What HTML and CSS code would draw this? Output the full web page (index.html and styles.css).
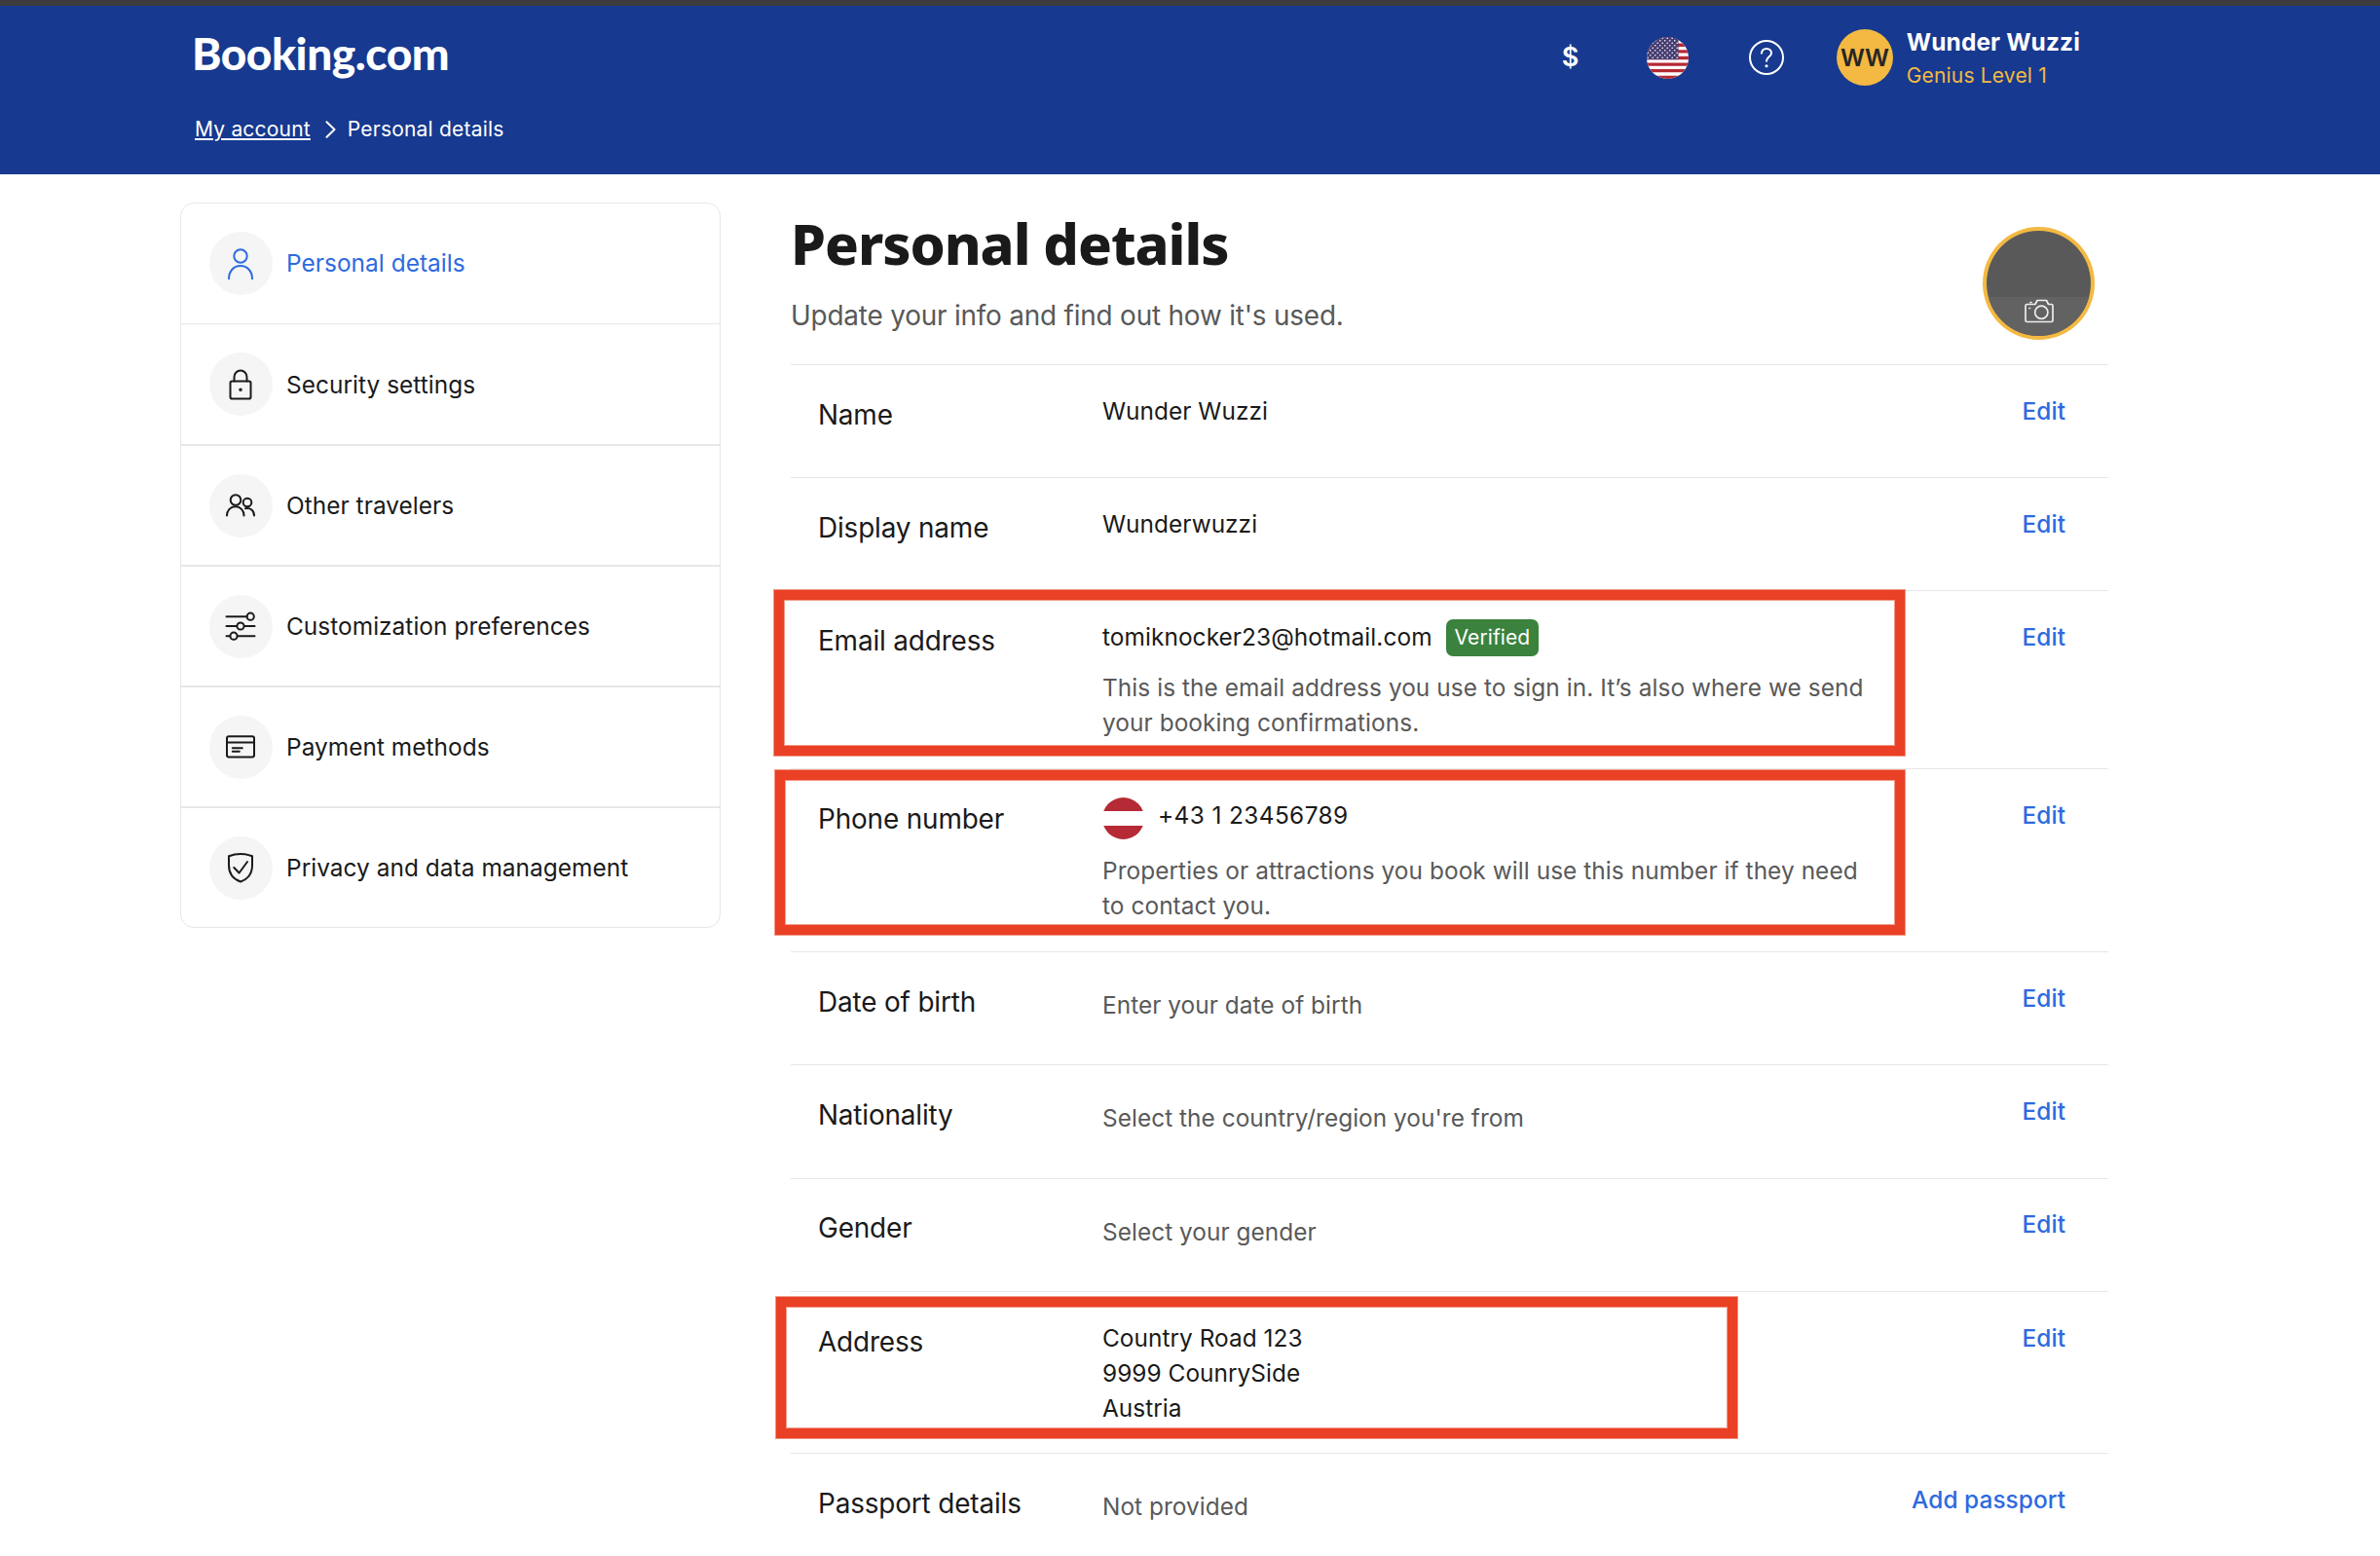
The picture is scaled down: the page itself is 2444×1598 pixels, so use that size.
FILE: index.html
```html
<!DOCTYPE html>
<html lang="en">
<head>
<meta charset="utf-8">
<title>Personal details</title>
<link rel="stylesheet" href="styles.css">
</head>
<body>
<header class="header">
  <div class="header-top">
    <a class="logo">Booking.com</a>
    <div class="header-tools">
      <span class="currency">$</span>
      <svg class="flag-us" viewBox="0 0 43 43">
        <defs>
          <clipPath id="us-clip"><circle cx="21.5" cy="21.5" r="21.5"/></clipPath>
          <pattern id="stars" width="5" height="5" patternUnits="userSpaceOnUse"><circle cx="1.2" cy="1.2" r=".8" fill="#fff"/><circle cx="3.7" cy="3.7" r=".8" fill="#fff"/></pattern>
        </defs>
        <g clip-path="url(#us-clip)">
          <rect width="43" height="43" fill="#fff"/>
          <path d="M0 1.65h43M0 8.27h43M0 14.9h43M0 21.5h43M0 28.1h43M0 34.7h43M0 41.35h43" stroke="#b52a34" stroke-width="3.3"/>
          <rect width="32.5" height="23.1" fill="#473f73"/>
          <rect width="32.5" height="23.1" fill="url(#stars)"/>
        </g>
      </svg>
      <svg class="help" viewBox="0 0 36 36" fill="none" stroke="#fff" stroke-width="2" stroke-linecap="round"><circle cx="18" cy="18" r="17"/><path d="M13 13.800c0-2.900 2.100-4.900 5-4.900s5 2 5 4.600c0 3.800-5 3.900-5 8.300"/><circle cx="18" cy="26.800" r=".8" fill="#fff" stroke-width="1.500"/></svg>
      <div class="profile">
        <span class="avatar">WW</span>
        <div class="profile-text">
          <div class="profile-name">Wunder Wuzzi</div>
          <div class="profile-level">Genius Level 1</div>
        </div>
      </div>
    </div>
  </div>
  <nav class="crumbs">
    <a class="crumb-link">My account</a>
    <svg class="chevron" viewBox="0 0 12 18" fill="none" stroke="#fff" stroke-width="2" stroke-linecap="round" stroke-linejoin="round"><path d="M1.500 1.300 9.500 9l-8 7.700"/></svg>
    <span>Personal details</span>
  </nav>
</header>
<div class="page">
  <nav class="sidebar">
    <a class="side-item active"><span class="side-icon"><svg viewBox="0 0 32 32"><circle cx="16" cy="8" r="6.700"/><path d="M4 31.500C4 23.500 9 18 16 18s12 5.500 12 13.500"/></svg></span><span>Personal details</span></a>
    <a class="side-item"><span class="side-icon"><svg viewBox="0 0 32 32"><rect x="5.500" y="12.500" width="21" height="18" rx="1.800"/><path d="M9.500 12.500V8.200a6.500 6.700 0 0 1 13 0v4.300"/><circle cx="16" cy="21.200" r=".8"/></svg></span><span>Security settings</span></a>
    <a class="side-item"><span class="side-icon"><svg viewBox="0 0 32 32"><circle cx="11" cy="10.500" r="5.300"/><path d="M2 26.500c0-5.300 3.700-9.200 8.800-9.200 5 0 8.700 3.900 8.700 9.200"/><circle cx="23" cy="13" r="4.300"/><path d="M21 19.300c5-1.200 9 2 9 7.200"/></svg></span><span>Other travelers</span></a>
    <a class="side-item"><span class="side-icon"><svg viewBox="0 0 32 32"><path d="M1.500 6.200h21M1.500 16h10.700M19.800 16h10.700M1.500 26.200h3.800M12.700 26.200h17.800"/><circle cx="26.200" cy="6.200" r="3.600"/><circle cx="16" cy="16" r="3.600"/><circle cx="9" cy="26.200" r="3.600"/></svg></span><span>Customization preferences</span></a>
    <a class="side-item"><span class="side-icon"><svg viewBox="0 0 32 32"><rect x="2" y="5.300" width="28" height="21.300" rx="2"/><path d="M2 11.500h28M7.800 17.300h10M7.800 20.800h7"/></svg></span><span>Payment methods</span></a>
    <a class="side-item"><span class="side-icon"><svg viewBox="0 0 32 32"><path d="M4 4.300Q16-.5 28 4.300V13.500C28 22 23 28 16 30.500 9 28 4 22 4 13.500Z"/><path d="M9.300 16l5.300 5.500L23 10"/></svg></span><span>Privacy and data management</span></a>
  </nav>
  <main class="main">
    <div class="intro">
      <div>
        <h1>Personal details</h1>
        <p class="subtitle">Update your info and find out how it's used.</p>
      </div>
      <div class="photo"><div class="photo-edit"><svg viewBox="0 0 30 26" fill="none" stroke="#eee" stroke-width="1.700" stroke-linejoin="round" stroke-linecap="round"><path d="M2.500 5.500H11l2-4h9.500l2 4h3a1.500 1.500 0 0 1 1.500 1.500v15a1.500 1.500 0 0 1-1.500 1.500h-25A1.500 1.500 0 0 1 1 22V7a1.500 1.500 0 0 1 1.500-1.500Z"/><circle cx="17.300" cy="13.700" r="6.600"/><path d="M5 9.500h.5M6 3.500h1"/></svg></div></div>
    </div>
    <div class="list">
      <div class="row"><div class="label">Name</div><div class="value">Wunder Wuzzi</div><a class="action">Edit</a></div>
      <div class="row"><div class="label">Display name</div><div class="value">Wunderwuzzi</div><a class="action">Edit</a></div>
      <div class="row"><div class="mark mark-email"></div><div class="label">Email address</div><div class="value"><div class="line"><span>tomiknocker23@hotmail.com</span><span class="badge">Verified</span></div><p class="note">This is the email address you use to sign in. It’s also where we send<br>your booking confirmations.</p></div><a class="action">Edit</a></div>
      <div class="row"><div class="mark mark-phone"></div><div class="label">Phone number</div><div class="value"><div class="line phone"><span class="flag-at"></span><span>+43 1 23456789</span></div><p class="note">Properties or attractions you book will use this number if they need<br>to contact you.</p></div><a class="action">Edit</a></div>
      <div class="row"><div class="label">Date of birth</div><div class="value empty">Enter your date of birth</div><a class="action">Edit</a></div>
      <div class="row"><div class="label">Nationality</div><div class="value empty">Select the country/region you're from</div><a class="action">Edit</a></div>
      <div class="row gender"><div class="label">Gender</div><div class="value empty">Select your gender</div><a class="action">Edit</a></div>
      <div class="row"><div class="mark mark-address"></div><div class="label">Address</div><div class="value">Country Road 123<br>9999 CounrySide<br>Austria</div><a class="action">Edit</a></div>
      <div class="row"><div class="label">Passport details</div><div class="value empty">Not provided</div><a class="action">Add passport</a></div>
    </div>
  </main>
</div>
</body>
</html>
```
FILE: styles.css
```css
* { box-sizing: border-box; }
body { margin: 0; height: 1598px; overflow: hidden; background: #fff; color: #1a1a1a; font-family: Inter, "Liberation Sans", sans-serif; font-size: 24.4px; line-height: 36px; }
h1, p { margin: 0; }
svg { display: block; }

/* Header */
.header { height: 179px; padding: 0 308px 0 200px; border-top: 6px solid #3c3c3c; background: #17398f; color: #fff; }
.header-top { display: flex; justify-content: space-between; height: 111px; }
.logo { margin-left: -3px; padding-top: 14px; font: 900 46px/70px Lato, sans-serif; letter-spacing: -.45px; }
.header-tools { display: flex; align-items: center; height: 106px; }
.currency { width: 87px; font-weight: 600; font-size: 27px; }
.flag-us { width: 43px; height: 43px; margin-right: 62px; }
.help { width: 36px; height: 36px; margin-right: 54px; }
.profile { display: flex; align-items: center; }
.avatar { display: flex; align-items: center; justify-content: center; width: 58px; height: 58px; margin-right: 14px; border-radius: 50%; background: #f3b942; color: #262626; font-weight: 600; letter-spacing: -.5px; }
.profile-text { padding-top: 2px; }
.profile-name { font-weight: 700; line-height: 35px; letter-spacing: .16px; }
.profile-level { color: #f3b942; font-size: 21px; line-height: 34px; letter-spacing: .18px; }
.crumbs { display: flex; align-items: center; font-size: 21px; line-height: 32px; letter-spacing: .2px; }
.crumb-link { text-decoration: underline; }
.chevron { width: 12px; height: 18px; margin: 0 11px 0 15px; }

.page { display: flex; align-items: flex-start; padding: 29px 279px 0 185px; }

/* Sidebar */
.sidebar { width: 555px; margin-right: 72px; border: 1px solid #e7e7e7; border-radius: 14px; letter-spacing: .05px; }
.side-item { display: flex; align-items: center; height: 124px; padding-left: 29px; border-bottom: 2px solid #e7e7e7; }
.side-item:first-child { border-bottom-width: 1px; }
.side-item:nth-child(2) { height: 125px; }
.side-item:last-child { height: 122px; border-bottom: 0; }
.side-icon { display: flex; align-items: center; justify-content: center; width: 65px; height: 65px; margin-right: 14px; border-radius: 50%; background: #f5f5f5; }
.side-icon svg { width: 32px; height: 32px; margin-right: 1px; fill: none; stroke: currentColor; stroke-width: 2; stroke-linecap: round; stroke-linejoin: round; }
.active { color: #2e6ae0; }
.active span:last-child { padding-bottom: 1px; }

/* Main column */
.main { width: 1353px; }
.intro { display: flex; justify-content: space-between; height: 166px; padding-right: 14px; }
h1 { padding-top: 4px; font: 800 57.6px/76px "Noto Sans", sans-serif; letter-spacing: -1.05px; }
.subtitle { margin-top: 15px; color: #595959; font-size: 27.9px; line-height: 43px; letter-spacing: -.19px; }
.photo { display: flex; align-items: flex-end; width: 115px; height: 116px; margin-top: 25px; overflow: hidden; border: 4px solid #f3b942; border-radius: 50%; background: #595959; }
.photo-edit { display: flex; justify-content: center; width: 100%; height: 40px; padding-top: 2px; background: #626262; }
.photo-edit svg { width: 30px; height: 26px; }
.list { display: grid; grid-template-rows: 116px 116px 183px 188px 116px 117px 116px 166px 116px; }
.row { position: relative; display: flex; padding: 29px 44px 0 28px; border-top: 1px solid #e7e7e7; }
.label { width: 292px; padding-top: 1px; font-size: 27.9px; line-height: 43px; letter-spacing: -.15px; }
.value { flex: 1; letter-spacing: .04px; }
.empty { padding-top: 7px; color: #595959; }
.action { color: #2e6ae0; font-weight: 500; letter-spacing: .06px; }
.gender { padding-top: 28px; }
.gender .empty { padding-top: 8px; }
.line { display: flex; gap: 14px; height: 38px; letter-spacing: .08px; }
.badge { height: 38px; padding: 0 9px; border-radius: 7px; background: #3a823e; color: #fff; font-size: 21px; line-height: 38px; }
.phone { height: 43px; letter-spacing: .4px; }
.flag-at { width: 43px; height: 43px; border-radius: 50%; background: linear-gradient(#b52a34 33.3%, #fff 33.3% 66.6%, #b52a34 66.6%); }
.note { margin-top: 14px; color: #595959; letter-spacing: .07px; }

/* Highlight frames over the rows */
.mark { position: absolute; border: 10px solid #ea4025; box-shadow: 0 0 0 1px #f09a88, inset 0 0 0 1px #f09a88; }
.mark-email { left: -17px; top: -1px; width: 1161px; height: 170px; }
.mark-phone { left: -16px; top: 1px; width: 1160px; height: 169px; }
.mark-address { left: -15px; top: 5px; width: 987px; height: 145px; }
```
